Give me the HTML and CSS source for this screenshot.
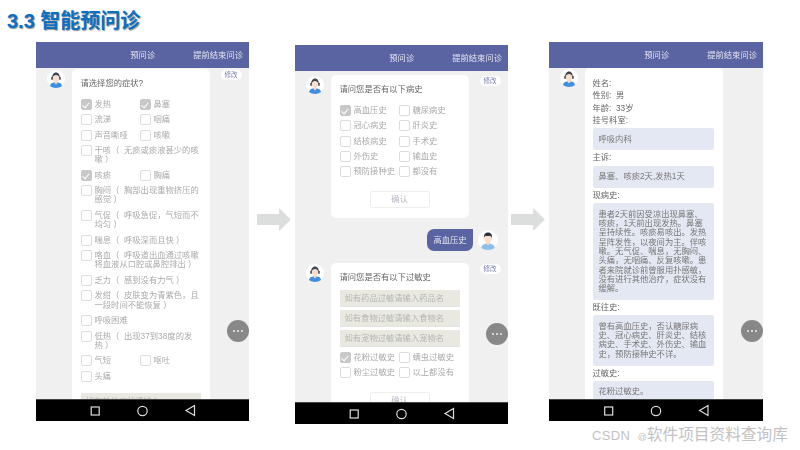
FILE: index.html
```html
<!DOCTYPE html>
<html>
<head>
    <meta charset="UTF-8">
    <title>3.3 智能预问诊</title>
    <link rel="stylesheet" href="styles.css">
</head>
<body>
    <svg width="0" height="0" class="defs">
        <symbol id="doctor" viewBox="0 0 18 18">
            <circle cx="9" cy="9" r="9" fill="#fff"/>
            <path d="M3 16c.5-3 3-3.800 6-3.800s5.500.8 6 3.800c-1.500 1.300-3.800 2-6 2s-4.500-.7-6-2z" fill="#3f8fe0"/>
            <path d="M7.500 10h3v3l-1.500 1.500-1.500-1.500z" fill="#f6d9c8"/>
            <ellipse cx="9" cy="8" rx="3.300" ry="3.800" fill="#f8dfd0"/>
            <path d="M5.300 8.500c-.5-3.500 1.300-6 3.700-6s4.200 2.500 3.700 6c-.5-2-1.800-3.200-3.700-3.400-1.900.2-3.200 1.400-3.700 3.400z" fill="#40434f"/>
            <rect x="4.300" y="6.800" width="1.500" height="3.200" rx=".7" fill="#40434f"/>
            <rect x="12.200" y="6.800" width="1.500" height="3.200" rx=".7" fill="#40434f"/>
        </symbol>
        <symbol id="patient" viewBox="0 0 18 18">
            <circle cx="9" cy="9" r="9" fill="#fff"/>
            <path d="M3 16c.5-2.800 2.800-3.800 6-3.800s5.500 1 6 3.800c-1.500 1.300-3.800 2-6 2s-4.500-.7-6-2z" fill="#8cc0ea"/>
            <path d="M7.500 10h3v2.600l-1.500 1.400-1.500-1.400z" fill="#f3d2bd"/>
            <ellipse cx="9" cy="7.800" rx="3.400" ry="4" fill="#f8dfd0"/>
            <path d="M5.500 7.500c-.6-3.200.8-5.200 3.500-5.200s4.100 2 3.500 5.200c-.3-1.300-.7-2-1.300-2.400-1.400.4-3.100.4-4.500 0-.6.4-1.400 1.100-1.200 2.400z" fill="#2d3038"/>
        </symbol>
        <symbol id="navbar" viewBox="0 0 213 22">
            <path d="M0 .5h213" stroke="#444"/>
            <rect x="55.200" y="8" width="8" height="8" fill="none" stroke="#ddd" stroke-width="1.200"/>
            <circle cx="106.500" cy="12" r="4.700" fill="none" stroke="#ddd" stroke-width="1.200"/>
            <path d="M158.500 6.500l-8.500 5 8.500 5z" fill="none" stroke="#ddd" stroke-width="1.200"/>
        </symbol>
    </svg>

    <h1 class="title">3.3 智能预问诊</h1>

    <div class="slide">
        <!-- 症状 -->
        <div class="phone">
            <div class="topbar"><span class="topbar-name">预问诊</span><span>提前结束问诊</span></div>
            <div class="chat">
                <div class="msg msg-first">
                    <svg class="avatar"><use href="#doctor"/></svg>
                    <div class="card">
                        <p class="ask">请选择您的症状?</p>
                        <div class="opts">
                            <div class="pair">
                                <div class="opt"><i class="box on"></i><span>发热</span></div>
                                <div class="opt"><i class="box on"></i><span>鼻塞</span></div>
                            </div>
                            <div class="pair">
                                <div class="opt"><i class="box"></i><span>流涕</span></div>
                                <div class="opt"><i class="box"></i><span>咽痛</span></div>
                            </div>
                            <div class="pair">
                                <div class="opt"><i class="box"></i><span>声音嘶哑</span></div>
                                <div class="opt"><i class="box"></i><span>咳嗽</span></div>
                            </div>
                            <div class="opt long"><i class="box"></i><span>干咳（&nbsp;&nbsp;无痰或痰液甚少的咳嗽 ）</span></div>
                            <div class="pair">
                                <div class="opt"><i class="box on"></i><span>咳痰</span></div>
                                <div class="opt"><i class="box"></i><span>胸痛</span></div>
                            </div>
                            <div class="opt long"><i class="box"></i><span>胸闷（&nbsp;&nbsp;胸部出现重物挤压的感觉 ）</span></div>
                            <div class="opt long"><i class="box"></i><span>气促（&nbsp;&nbsp;呼吸急促，气短而不均匀 ）</span></div>
                            <div class="opt"><i class="box"></i><span>喘息（&nbsp;&nbsp;呼吸深而且快 ）</span></div>
                            <div class="opt long"><i class="box"></i><span>咯血（&nbsp;&nbsp;呼吸道出血通过咳嗽将血液从口腔或鼻腔排出 ）</span></div>
                            <div class="opt"><i class="box"></i><span>乏力（&nbsp;&nbsp;感到没有力气 ）</span></div>
                            <div class="opt long"><i class="box"></i><span>发绀（&nbsp;&nbsp;皮肤变为青紫色，且一段时间不能恢复 ）</span></div>
                            <div class="opt"><i class="box"></i><span>呼吸困难</span></div>
                            <div class="opt long"><i class="box"></i><span>低热（&nbsp;&nbsp;出现37到38度的发热 ）</span></div>
                            <div class="pair">
                                <div class="opt"><i class="box"></i><span>气短</span></div>
                                <div class="opt"><i class="box"></i><span>呕吐</span></div>
                            </div>
                            <div class="opt"><i class="box"></i><span>头痛</span></div>
                        </div>
                        <div class="field field-other">如有其他症状请输入</div>
                    </div>
                    <span class="edit">修改</span>
                </div>
            </div>
            <div class="more"><b></b><b></b><b></b></div>
            <svg class="nav"><use href="#navbar"/></svg>
        </div>

        <div class="arrow arrow-a"></div>

        <!-- 病史 -->
        <div class="phone phone-low">
            <div class="topbar"><span class="topbar-name">预问诊</span><span>提前结束问诊</span></div>
            <div class="chat">
                <div class="msg msg-gap">
                    <svg class="avatar"><use href="#doctor"/></svg>
                    <div class="card">
                        <p class="ask">请问您是否有以下病史</p>
                        <div class="opts">
                            <div class="pair">
                                <div class="opt"><i class="box on"></i><span>高血压史</span></div>
                                <div class="opt"><i class="box"></i><span>糖尿病史</span></div>
                            </div>
                            <div class="pair">
                                <div class="opt"><i class="box"></i><span>冠心病史</span></div>
                                <div class="opt"><i class="box"></i><span>肝炎史</span></div>
                            </div>
                            <div class="pair">
                                <div class="opt"><i class="box"></i><span>结核病史</span></div>
                                <div class="opt"><i class="box"></i><span>手术史</span></div>
                            </div>
                            <div class="pair">
                                <div class="opt"><i class="box"></i><span>外伤史</span></div>
                                <div class="opt"><i class="box"></i><span>输血史</span></div>
                            </div>
                            <div class="pair">
                                <div class="opt"><i class="box"></i><span>预防接种史</span></div>
                                <div class="opt"><i class="box"></i><span>都没有</span></div>
                            </div>
                        </div>
                        <div class="confirm">确认</div>
                    </div>
                    <span class="edit">修改</span>
                </div>
                <div class="reply">
                    <div class="bubble">高血压史</div>
                    <svg class="avatar"><use href="#patient"/></svg>
                </div>
                <div class="msg">
                    <svg class="avatar"><use href="#doctor"/></svg>
                    <div class="card">
                        <p class="ask ask-tight">请问您是否有以下过敏史</p>
                        <div class="field">如有药品过敏请输入药品名</div>
                        <div class="field">如有食物过敏请输入食物名</div>
                        <div class="field">如有宠物过敏请输入宠物名</div>
                        <div class="opts opts-after">
                            <div class="pair">
                                <div class="opt"><i class="box on"></i><span>花粉过敏史</span></div>
                                <div class="opt"><i class="box"></i><span>螨虫过敏史</span></div>
                            </div>
                            <div class="pair">
                                <div class="opt"><i class="box"></i><span>粉尘过敏史</span></div>
                                <div class="opt"><i class="box"></i><span>以上都没有</span></div>
                            </div>
                        </div>
                        <div class="confirm">确认</div>
                    </div>
                    <span class="edit">修改</span>
                </div>
            </div>
            <div class="more"><b></b><b></b><b></b></div>
            <svg class="nav"><use href="#navbar"/></svg>
        </div>

        <div class="arrow arrow-b"></div>

        <!-- 预问诊结果 -->
        <div class="phone phone-last">
            <div class="topbar"><span class="topbar-name">预问诊</span><span>提前结束问诊</span></div>
            <div class="chat">
                <div class="msg">
                    <svg class="avatar"><use href="#doctor"/></svg>
                    <div class="card card-report">
                        <p class="line">姓名:</p>
                        <p class="line">性别:&nbsp; 男</p>
                        <p class="line">年龄:&nbsp; 33岁</p>
                        <p class="line">挂号科室:</p>
                        <div class="note">呼吸内科</div>
                        <p class="line">主诉:</p>
                        <div class="note">鼻塞、咳痰2天,发热1天</div>
                        <p class="line">现病史:</p>
                        <div class="note">患者2天前因受凉出现鼻塞、咳痰，1天前出现发热。鼻塞呈持续性。咳痰易咳出。发热呈阵发性，以夜间为主。伴咳嗽。无气促、喘息，无胸闷、头痛，无咽痛、反复咳嗽。患者来院就诊前曾服用扑感敏，没有进行其他治疗，症状没有缓解。</div>
                        <p class="line">既往史:</p>
                        <div class="note">曾有高血压史，否认糖尿病史、冠心病史、肝炎史、结核病史、手术史、外伤史、输血史，预防接种史不详。</div>
                        <p class="line">过敏史:</p>
                        <div class="note">花粉过敏史。</div>
                    </div>
                </div>
            </div>
            <div class="more"><b></b><b></b><b></b></div>
            <svg class="nav"><use href="#navbar"/></svg>
        </div>
    </div>

    <div class="mark"><span class="mark-en">CSDN</span> <span class="mark-at">@</span>软件项目资料查询库</div>
</body>
</html>
```

FILE: styles.css
```css
* { box-sizing: border-box; }
html, body { margin: 0; height: 450px; overflow: hidden; }
body {
    background: #fff;
    font-family: "Liberation Sans", "Noto Sans CJK SC", sans-serif;
}
p { margin: 0; }
.defs { display: block; height: 0; }

.title {
    margin: 0;
    height: 42px;
    padding: 9px 0 0 7px;
    font-size: 20px;
    line-height: 25px;
    font-weight: bold;
    color: #0b6fc2;
    text-shadow: 1px 1px 1px #9a9a9a;
}

.slide {
    display: flex;
    align-items: flex-start;
    padding-left: 36px;
}
.phone {
    position: relative;
    display: flex;
    flex-direction: column;
    flex: none;
    width: 213px;
    height: 379px;
    overflow: hidden;
    background: #f0f0f0;
    color: #aaa;
    font-size: 8.3px;
    line-height: 9.3px;
    filter: blur(.35px);
}
.phone-low { margin-top: 3px; }
.phone-last { width: 214px; }

.arrow {
    flex: none;
    width: 34px;
    height: 23px;
    margin-top: 166px;
    background: #dcdedd;
    clip-path: polygon(0 26%, 65% 26%, 65% 0, 100% 50%, 65% 100%, 65% 74%, 0 74%);
}
.arrow-a { margin-left: 8px; margin-right: 4px; }
.arrow-b { margin-left: 3px; margin-right: 4px; }

.topbar {
    flex: none;
    display: flex;
    justify-content: flex-end;
    height: 26px;
    padding-right: 6px;
    background: #5b64a2;
    color: #e4e5f0;
    line-height: 26px;
}
.topbar-name { margin-right: 38px; }

.chat { flex: 1; min-height: 0; overflow: hidden; }
.msg { display: flex; align-items: flex-start; }
.msg-first { margin-top: 1px; }
.msg-gap { margin-top: 4px; }
.avatar { flex: none; width: 18px; height: 18px; margin: 1px 6.5px 0 11px; }
.msg .card { border-radius: 5px; }
.card {
    flex: none;
    width: 138px;
    padding: 8px 9px 10px;
    background: #fff;
}
.ask { color: #666; line-height: 10px; height: 10px; margin-top: 1px; }
.edit {
    flex: none;
    width: 21px;
    height: 10px;
    margin: 1px 0 0 11px;
    border-radius: 5px;
    background: #fff;
    color: #7a80b0;
    font-size: 6.500px;
    line-height: 10px;
    text-align: center;
}

.opts { display: flex; flex-direction: column; gap: 4.300px; margin-top: 11px; }
.opts-after { margin-top: 5px; }
.pair { display: flex; }
.pair .opt { width: 59px; white-space: nowrap; }
.opt { display: flex; gap: 3px; }
.opt span { flex: none; max-width: 105px; padding-top: 1px; }
.long { margin-bottom: 1px; }
.box {
    flex: none;
    position: relative;
    width: 11px;
    height: 11px;
    border: 1px solid #dcdcdc;
    border-radius: 2px;
    background: #fff;
}
.box.on { border-color: #c8c8c8; background: #c8c8c8; }
.box.on::after {
    content: "";
    position: absolute;
    left: 2.500px;
    top: 1.200px;
    width: 3px;
    height: 5.500px;
    border: solid #fff;
    border-width: 0 1.200px 1.200px 0;
    transform: rotate(40deg);
}

.confirm {
    width: 60px;
    height: 17px;
    margin: 14px auto 0;
    border: 1px solid #eee;
    border-radius: 2px;
    color: #b9b9c4;
    line-height: 15px;
    text-align: center;
}
.field {
    height: 17px;
    margin-top: 3px;
    padding-left: 5px;
    background: #e9e9e1;
    border-bottom: 1px solid #e2e4e4;
    color: #b5b5b5;
    line-height: 17px;
}
.ask-tight + .field { margin-top: 8px; }
.field-other { margin-top: 11px; }

.reply { display: flex; justify-content: flex-end; align-items: center; margin: 11px 0 12px; }
.reply .avatar { margin: 0 10px 0 5px; width: 20px; height: 20px; }
.bubble {
    width: 46px;
    height: 22px;
    border-radius: 7px 0 7px 7px;
    background: #5b64a2;
    color: #e4e5f0;
    line-height: 22px;
    text-align: center;
}

.card-report { padding: 9px 9px 0 8px; color: #666; }
.line { height: 12.300px; line-height: 12.300px; }
.note {
    margin: 2px 0 1px;
    padding: 6.500px 6px;
    border-radius: 2px;
    background: #e4e8f2;
    color: #777;
}

.more {
    position: absolute;
    right: 0;
    top: 278px;
    display: flex;
    justify-content: center;
    align-items: center;
    gap: 2px;
    width: 22px;
    height: 22px;
    border-radius: 50%;
    background: #888;
}
.more b { width: 2px; height: 2px; border-radius: 50%; background: #eee; }

.nav {
    flex: none;
    display: block;
    width: 100%;
    height: 22px;
    background: #000;
}

.mark {
    position: absolute;
    right: 12px;
    top: 426px;
    color: #c2c2c2;
    font-size: 15.700px;
    line-height: 18px;
    white-space: nowrap;
}
.mark-en { font-size: 13px; letter-spacing: .4px; }
.mark-at { font-size: 9px; margin-left: 3px; }
```
